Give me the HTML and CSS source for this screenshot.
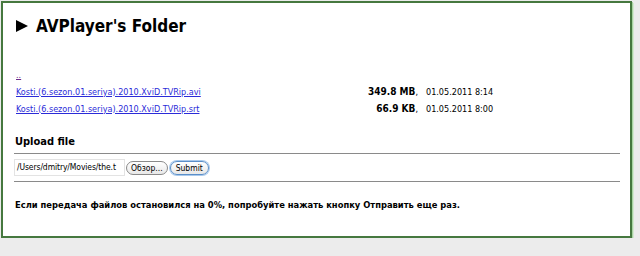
FILE: index.html
```html
<!DOCTYPE html>
<html>
<head>
    <meta charset="utf-8">
    <title>AVPlayer's Folder</title>
    <link rel="stylesheet" href="styles.css">
</head>
<body>

<div class="page">
    <h1><span class="arrow"></span>AVPlayer's Folder</h1>

    <table class="files">
        <tr>
            <td class="name"><a class="up" href="#">..</a></td>
            <td class="size"></td>
            <td class="date"></td>
        </tr>
        <tr>
            <td class="name"><a href="#">Kosti.(6.sezon.01.seriya).2010.XviD.TVRip.avi</a></td>
            <td class="size"><b>349.8 MB</b>,</td>
            <td class="date">01.05.2011 8:14</td>
        </tr>
        <tr>
            <td class="name"><a href="#">Kosti.(6.sezon.01.seriya).2010.XviD.TVRip.srt</a></td>
            <td class="size"><b>66.9 KB</b>,</td>
            <td class="date">01.05.2011 8:00</td>
        </tr>
    </table>

    <h2>Upload file</h2>
    <hr>
    <form class="upload">
        <span class="path">/Users/dmitry/Movies/the.t</span>
        <span class="btn">Обзор...</span>
        <span class="btn focus">Submit</span>
    </form>
    <hr>

    <p class="note">Если передача файлов остановился на 0%, попробуйте нажать кнопку Отправить еще раз.</p>
</div>

</body>
</html>
```

FILE: styles.css
```css
* {
    font-family: Tahoma, "DejaVu Sans Condensed", "DejaVu Sans", sans-serif;
}
body {
    margin: 0;
    background: #ececec;
}
.page {
    margin: 1px 0 0 1px;
    width: 604px;
    height: 210px;
    padding: 10px 12px 13px 11px;
    background: #fff;
    border: 2px solid #46783f;
    box-shadow: 1px 1px 0 #a8d4a2, 2px 2px 0 #d4e8d0;
}
h1 {
    display: flex;
    align-items: center;
    margin: 2px 0 0 2px;
    font-size: 17px;
    font-weight: bold;
    line-height: 22px;
}
h1 .arrow {
    width: 0;
    height: 0;
    border-left: 12px solid #000;
    border-top: 6px solid transparent;
    border-bottom: 6px solid transparent;
    margin-right: 8px;
}
.files {
    margin-top: 29px;
    border-collapse: collapse;
    font-size: 9px;
}
.files td {
    padding: 0;
    height: 17px;
    vertical-align: middle;
}
.files .name {
    width: 345px;
    padding-left: 2px;
}
.files .size {
    width: 57px;
    text-align: right;
}
.files .size b {
    font-size: 10px;
}
.files .date {
    padding-left: 8px;
}
a {
    color: #2b2bd8;
}
a.up {
    color: #6a2b8a;
}
h2 {
    margin: 17px 0 0 1px;
    font-size: 11px;
    line-height: 16px;
}
hr {
    margin: 3px 0 0 0;
    border: 0;
    border-top: 1px solid #8a8a8a;
    height: 0;
    width: 606px;
}
.upload {
    display: flex;
    align-items: center;
    gap: 1px;
    margin: 5px 0 5px 0;
    font-size: 8.5px;
}
.upload .path {
    width: 107px;
    height: 15px;
    line-height: 15px;
    padding-left: 2px;
    border: 1px solid #e3e3e3;
    overflow: hidden;
    white-space: nowrap;
    letter-spacing: -0.1px;
}
.upload .btn {
    padding: 0 4px;
    height: 12px;
    line-height: 12px;
    border: 1px solid #8a8a8a;
    border-radius: 7px;
    background: linear-gradient(#fff, #e8e8e8);
}
.upload .btn.focus {
    padding: 0 5px;
    border-color: #5b8fc9;
    box-shadow: 0 0 0 1px #a9c9ec;
    margin-left: 1px;
}
.note {
    margin: 17px 0 0 1px;
    font-size: 9.3px;
    font-weight: bold;
}
```
